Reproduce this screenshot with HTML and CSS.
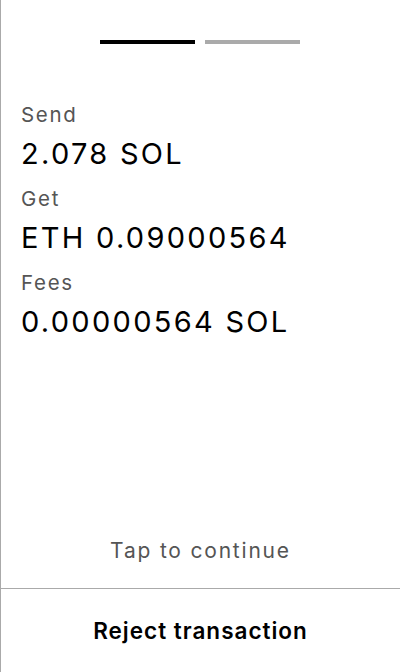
FILE: index.html
```html
<!DOCTYPE html>
<html>
<head>
<meta charset="utf-8">
<link rel="stylesheet" href="styles.css">
</head>
<body>
<div class="screen">
  <div class="progress">
    <div class="bar bar-active"></div>
    <div class="bar bar-idle"></div>
  </div>
  <div class="details">
    <div class="item">
      <div class="label">Send</div>
      <div class="value">2.078 SOL</div>
    </div>
    <div class="item">
      <div class="label">Get</div>
      <div class="value">ETH 0.09000564</div>
    </div>
    <div class="item">
      <div class="label">Fees</div>
      <div class="value">0.00000564 SOL</div>
    </div>
  </div>
  <div class="tap">Tap to continue</div>
  <div class="reject">Reject transaction</div>
</div>
</body>
</html>
```
FILE: styles.css
```css
html, body {
  margin: 0;
  padding: 0;
  background: #fff;
}
body {
  font-family: Inter, "Noto Sans", sans-serif;
  color: #000;
}
.screen {
  box-sizing: border-box;
  height: 672px;
  border-left: 1px solid #aaa;
  display: flex;
  flex-direction: column;
}
.progress {
  display: flex;
  justify-content: center;
  gap: 10px;
  padding-top: 40px;
  padding-right: 1px;
}
.bar {
  width: 95px;
  height: 4px;
}
.bar-active { background: #000; }
.bar-idle { background: #aaa; }
.details {
  padding: 59px 20px 0 20px;
  display: flex;
  flex-direction: column;
}
.item {
  display: flex;
  flex-direction: column;
}
.label {
  font-size: 20.5px;
  line-height: 24px;
  letter-spacing: 1.7px;
  color: #555;
}
.value {
  font-size: 29px;
  line-height: 36px;
  letter-spacing: 2.3px;
  margin-top: 9px;
  margin-bottom: 15px;
}
.tap {
  margin-top: auto;
  text-align: center;
  font-size: 21px;
  line-height: 24px;
  letter-spacing: 1.8px;
  color: #555;
  padding-bottom: 25px;
}
.reject {
  border-top: 1px solid #aaa;
  height: 83px;
  display: flex;
  align-items: center;
  justify-content: center;
  font-size: 22.5px;
  font-weight: 600;
  letter-spacing: 1px;
}
```
